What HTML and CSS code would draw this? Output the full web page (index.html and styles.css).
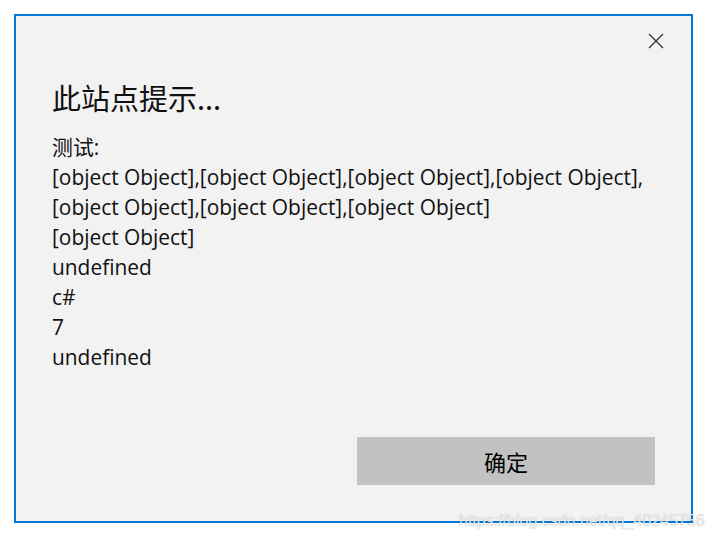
FILE: index.html
```html
<!DOCTYPE html>
<html lang="zh">
<head>
<meta charset="utf-8">
<link rel="stylesheet" href="styles.css">
</head>
<body>
<div class="dialog">
  <div class="header">
    <span class="close" aria-label="关闭">
      <svg width="16" height="16" viewBox="0 0 16 16"><path d="M1 1 L15 15 M15 1 L1 15" stroke="#333" stroke-width="1.4" fill="none"/></svg>
    </span>
  </div>
  <h1 class="title">此站点提示...</h1>
  <div class="message">
    <div class="line">测试:</div>
    <div class="line">[object Object],[object Object],[object Object],[object Object],</div>
    <div class="line">[object Object],[object Object],[object Object]</div>
    <div class="line">[object Object]</div>
    <div class="line">undefined</div>
    <div class="line">c#</div>
    <div class="line">7</div>
    <div class="line">undefined</div>
  </div>
  <div class="actions">
    <button class="ok">确定</button>
  </div>
</div>
<div class="watermark">https://blog.csdn.net/qq_40245756</div>
</body>
</html>
```

FILE: styles.css
```css
html, body {
  margin: 0;
  padding: 0;
  background: #ffffff;
}
body {
  padding: 14px;
  font-family: "Open Sans", "Noto Sans CJK SC", sans-serif;
  position: relative;
  width: 712px;
  height: 542px;
  box-sizing: border-box;
  overflow: hidden;
}
.dialog {
  box-sizing: border-box;
  width: 679px;
  height: 509px;
  border: 2px solid #0078d7;
  background: #f2f2f2;
  padding: 0 36px 36px 36px;
  display: flex;
  flex-direction: column;
}
.header {
  display: flex;
  justify-content: flex-end;
  padding-top: 17px;
  margin-right: -9px;
  height: 16px;
}
.close {
  width: 16px;
  height: 16px;
  display: block;
}
.close svg { display: block; }
.title {
  margin: 28px 0 0 0;
  font-family: "Noto Sans CJK SC", sans-serif;
  font-weight: normal;
  font-size: 29px;
  line-height: 40px;
  color: #111;
}
.message {
  margin-top: 15px;
  font-size: 20.9px;
  line-height: 30px;
  color: #111;
}
.line { white-space: nowrap; }
.actions {
  margin-top: auto;
  display: flex;
  justify-content: flex-end;
}
.ok {
  width: 298px;
  height: 48px;
  border: none;
  background: #c2c2c2;
  font-family: "Noto Sans CJK SC", sans-serif;
  font-size: 22px;
  color: #000;
  padding: 0;
}
.watermark {
  position: absolute;
  left: 459px;
  top: 512px;
  font-family: "Liberation Sans", Arial, sans-serif;
  font-size: 16px;
  color: rgba(240,240,240,0.95);
  text-shadow: 0 0 1px rgba(0,0,0,0.3);
  white-space: nowrap;
}
```
